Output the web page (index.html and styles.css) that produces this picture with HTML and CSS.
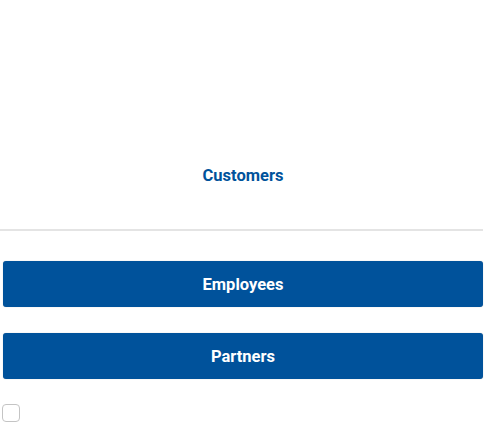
FILE: index.html
```html
<!DOCTYPE html>
<html>
<head>
<meta charset="utf-8">
<link rel="stylesheet" href="styles.css">
</head>
<body>
<div class="page">
  <button class="btn btn-link">Customers</button>
  <div class="divider"></div>
  <button class="btn btn-primary">Employees</button>
  <button class="btn btn-primary">Partners</button>
  <label class="check"><input type="checkbox" class="check-input"><span class="check-box"></span></label>
</div>
</body>
</html>
```
FILE: styles.css
```css
html, body {
  margin: 0;
  padding: 0;
  background: #ffffff;
}
.page {
  display: flex;
  flex-direction: column;
  width: 484px;
  padding-top: 152px;
  font-family: Roboto, "Noto Sans", sans-serif;
}
.btn {
  height: 46px;
  border: 0;
  margin: 0 1px 0 3px;
  font-family: inherit;
  font-size: 16.5px;
  font-weight: 700;
  border-radius: 3px;
  padding: 0;
}
.btn-link {
  background: transparent;
  color: #00529b;
}
.btn-primary {
  background: #00529b;
  color: #ffffff;
  box-shadow: 0 0 1px rgba(0,0,0,0.3);
}
.divider {
  height: 2px;
  background: #e4e4e4;
  margin: 31px 1px 30px 0;
}
.btn-primary + .btn-primary {
  margin-top: 26px;
}
.check {
  display: flex;
  margin: 25px 0 0 2px;
}
.check-input {
  display: none;
}
.check-box {
  width: 16px;
  height: 16px;
  border: 1px solid #c4c4c4;
  border-radius: 4px;
  background: #fff;
}
```
